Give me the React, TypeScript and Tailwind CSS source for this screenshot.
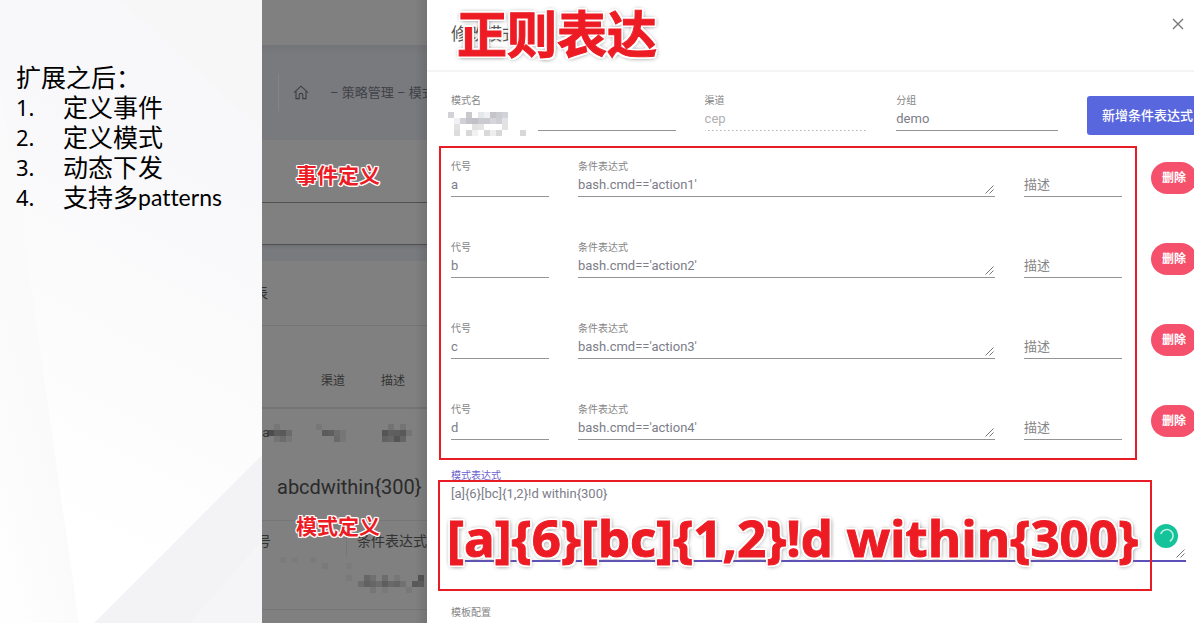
import { useId, useState } from "react";
import type { ReactNode } from "react";

const FONT = "font-['Roboto','Noto_Sans_CJK_SC',sans-serif]";

const OUTLINE =
  "text-[#ed1c24] whitespace-nowrap font-bold [text-shadow:2px_0_0_#fff,-2px_0_0_#fff,0_2px_0_#fff,0_-2px_0_#fff,2px_2px_0_#fff,-2px_-2px_0_#fff,2px_-2px_0_#fff,-2px_2px_0_#fff,0_0_5px_#777,1px_1px_5px_#888]";

const OUTLINE_SMALL =
  "text-[#ed1c24] whitespace-nowrap font-bold [text-shadow:1px_0_0_#fff,-1px_0_0_#fff,0_1px_0_#fff,0_-1px_0_#fff,1px_1px_0_#fff,-1px_-1px_0_#fff,1px_-1px_0_#fff,-1px_1px_0_#fff,0_0_2px_#fff]";

type Cell = [col: number, row: number, fill: string];

const NAME_CELLS: Cell[] = [
  [0, 0, "#d3d3d7"], [3, 0, "#cacace"], [5, 0, "#e6e7ea"], [6, 0, "#eff0f2"], [7, 0, "#c4c4ca"], [8, 0, "#cbccd2"], [9, 0, "#d2d3d8"],
  [1, 1, "#f0f1f3"], [2, 1, "#d0d1d5"], [3, 1, "#c3c3c9"], [4, 1, "#c0c0c8"], [5, 1, "#cacbd0"], [6, 1, "#cacad0"], [7, 1, "#d6d6da"], [8, 1, "#cecfd3"], [9, 1, "#e3e3e6"],
  [1, 2, "#e2e2e2"], [4, 2, "#e2e2e2"], [5, 2, "#e4e4e4"], [9, 2, "#e2e2e2"],
  [1, 3, "#dcdcdc"], [3, 3, "#d8d8d8"], [4, 3, "#f1f1f1"], [6, 3, "#d9d9d9"], [7, 3, "#eeeeee"], [8, 3, "#d8d8d8"], [12, 3, "#d8d8d8"],
];

const LIST_CELLS: Cell[] = [
  [2, 0, "#767676"], [9, 0, "#777"], [21, 0, "#727272"], [23, 0, "#747474"],
  [1, 1, "#4c4c4c"], [2, 1, "#5c5c5c"], [3, 1, "#595959"], [4, 1, "#6b6b6b"],
  [10, 1, "#5b5b5b"], [11, 1, "#5e5e5e"], [12, 1, "#6d6d6d"], [13, 1, "#767676"],
  [20, 1, "#555"], [21, 1, "#606060"], [22, 1, "#5e5e5e"], [23, 1, "#595959"], [24, 1, "#747474"],
  [2, 2, "#747474"], [3, 2, "#6c6c6c"], [4, 2, "#777"], [12, 2, "#6a6a6a"], [13, 2, "#777"],
  [20, 2, "#626262"], [21, 2, "#676767"], [22, 2, "#555"], [23, 2, "#656565"],
];

const DETAIL_CELLS: Cell[] = [
  [3, 0, "#7b7b7b"], [5, 0, "#7c7c7c"], [8, 0, "#7b7b7b"], [10, 1, "#7a7a7a"], [14, 1, "#7c7c7c"],
  [14, 3, "#7a7a7a"], [17, 3, "#666"], [18, 3, "#707070"], [20, 3, "#6c6c6c"], [22, 3, "#777"], [26, 3, "#555"],
  [16, 4, "#6e6e6e"], [17, 4, "#616161"], [18, 4, "#666"], [19, 4, "#6d6d6d"], [20, 4, "#5e5e5e"], [21, 4, "#696969"],
  [22, 4, "#656565"], [23, 4, "#717171"], [25, 4, "#595959"], [26, 4, "#5f5f5f"],
  [18, 5, "#767676"], [20, 5, "#7a7a7a"], [24, 5, "#787878"],
];

function Mosaic({ cells, cols, rows, className = "" }: { cells: Cell[]; cols: number; rows: number; className?: string }) {
  return (
    <svg aria-hidden="true" className={`block shrink-0 ${className}`} width={cols * 6} height={rows * 6} shapeRendering="crispEdges">
      {cells.map(([c, r, fill]) => (
        <rect key={`${c}-${r}`} x={c * 6} y={r * 6} width="6" height="6" fill={fill} />
      ))}
    </svg>
  );
}

function Slide() {
  const items = ["定义事件", "定义模式", "动态下发", "支持多"];
  return (
    <aside className="relative w-[262px] shrink-0 overflow-hidden bg-[#fafafa] px-4 pt-[62px] font-['Lato','Noto_Sans_CJK_SC',sans-serif] text-[25px] leading-[30px] text-black">
      <svg aria-hidden="true" className="absolute inset-0 h-full w-full" viewBox="0 0 262 623" preserveAspectRatio="none">
        <defs>
          <linearGradient id="facet-main" gradientUnits="userSpaceOnUse" x1="90" y1="540" x2="270" y2="200">
            <stop offset="0" stopColor="#ffffff" />
            <stop offset="1" stopColor="#f8f8fa" />
          </linearGradient>
          <linearGradient id="facet-left" gradientUnits="userSpaceOnUse" x1="0" y1="560" x2="70" y2="540">
            <stop offset="0" stopColor="#fefefe" />
            <stop offset="1" stopColor="#fafafb" />
          </linearGradient>
        </defs>
        <rect width="262" height="623" fill="url(#facet-main)" />
        <path d="M0 0 L120 0 L262 130 L262 0 Z" fill="#f7f7f7" />
        <path d="M0 90 L20 200 L36 322 L79 623 L0 623 Z" fill="url(#facet-left)" />
        <path d="M262 455 L94 623 L262 623 Z" fill="#f3f3f6" />
        <path d="M262 540 L190 623 L262 623 Z" fill="#f5f5f7" />
      </svg>
      <div className="relative">
        <p>扩展之后：</p>
        <ol>
          {items.map((item, i) => (
            <li key={item} className="flex whitespace-nowrap">
              <span className="w-[47px] font-['Noto_Sans',sans-serif] text-[22px]">{i + 1}.</span>
              <span>{item}</span>
              {i === 3 && <span className="text-[23px] [font-variant-ligatures:none]">patterns</span>}
            </li>
          ))}
        </ol>
      </div>
    </aside>
  );
}

function HomeIcon() {
  return (
    <svg aria-hidden="true" className="shrink-0" width="16" height="15" viewBox="0 0 16 15" fill="none" stroke="#3c3d42" strokeWidth="1.1">
      <path d="M1 7.6 L8 1.2 L15 7.6" />
      <path d="M3 6.2 V13.6 H6.2 V9.6 Q6.2 8.4 8 8.4 Q9.8 8.4 9.8 9.6 V13.6 H13 V6.2" />
    </svg>
  );
}

function DimmedPage() {
  return (
    <section className="relative w-[165px] shrink-0 overflow-hidden bg-[#808080] text-[12px] leading-4 whitespace-nowrap text-[#333]">
      <div className="h-[45px]" />
      <nav className="flex h-[95px] items-center bg-linear-to-b from-[#747578] to-[#797a7d] to-10% pl-4 text-[13px] text-[#414248]">
        <span className="mr-[14px] h-[37px] border-l border-[#838487]" />
        <HomeIcon />
        <span className="ml-[21px]">– 策略管理 – 模式管理</span>
      </nav>
      <div className="flex h-[63px] items-center border-b border-[#505050] pt-[9px] pl-[34px]">
        <span className={`text-[21px] leading-6 ${OUTLINE_SMALL}`}>事件定义</span>
      </div>
      <div className="h-[42px] border-b border-[#505050]" />
      <div className="h-4 bg-linear-to-b from-[#707174] to-[#797a7d] to-30%" />
      <div className="flex h-[65px] items-center border-b border-[#757575]">
        <span className="-ml-2 text-[14px]">表</span>
      </div>
      <div className="flex h-[83px] items-end border-b-2 border-[#747474] pb-[18px] pl-[59px]">
        <span className="w-[60px]">渠道</span>
        <span>描述</span>
      </div>
      <div className="relative flex h-[41px] items-center pt-[7px]">
        <span className="absolute top-4 -left-[7px] text-[13px]">pa</span>
        <Mosaic cells={LIST_CELLS} cols={27} rows={3} />
      </div>
      <div className="flex h-[71px] items-center border-b border-[#767676] pt-1">
        <span className="-ml-1 w-[19px]">：</span>
        <span className="text-[20px] leading-6 text-[#2a2a2a]">abcdwithin{"{300}"}</span>
      </div>
      <div className="relative flex h-9 items-center text-[14px]">
        <span className="-ml-[5px] w-[91px] pt-1">号</span>
        <span className="border-l border-[#777] pt-3 pb-2 pl-[10px]">条件表达式</span>
        <span className={`absolute -top-[6px] left-[34px] text-[21px] leading-6 ${OUTLINE_SMALL}`}>模式定义</span>
      </div>
      <div className="flex h-[53px] border-b border-[#767676]">
        <Mosaic cells={DETAIL_CELLS} cols={28} rows={6} />
      </div>
      <div className="pointer-events-none absolute inset-y-0 right-0 w-3 bg-linear-to-r from-transparent to-black/10" />
    </section>
  );
}

const LABEL = "block h-[14px] text-[10px] leading-[18px] whitespace-nowrap";
const CONTROL = "block h-[25px] w-full border-b bg-transparent text-[13px] leading-[24px] text-[#7c7d89] outline-none";

function ResizeGrip({ className }: { className: string }) {
  return (
    <svg aria-hidden="true" className={`pointer-events-none absolute ${className}`} width="9" height="9" viewBox="0 0 9 9" stroke="#777" strokeWidth="1">
      <path d="M0.5 8.5 L8.5 0.5 M4.5 8.5 L8.5 4.5" />
    </svg>
  );
}

function Field({ label, children }: { label: string; children: (id: string) => ReactNode }) {
  const id = useId();
  return (
    <div className="relative min-w-0">
      <label htmlFor={id} className={`${LABEL} text-[#858585]`}>{label}</label>
      {children(id)}
    </div>
  );
}

function ConditionRow({ code, expression }: { code: string; expression: string }) {
  const [remark, setRemark] = useState("");
  return (
    <div className="grid grid-cols-[98fr_417fr_98fr_43px] items-center gap-[29px]">
      <Field label="代号">
        {(id) => <input id={id} defaultValue={code} className={`${CONTROL} border-[#949494]`} />}
      </Field>
      <Field label="条件表达式">
        {(id) => (
          <>
            <textarea id={id} rows={1} defaultValue={expression} className={`${CONTROL} resize-none overflow-hidden border-[#949494] pt-px`} />
            <ResizeGrip className="right-px bottom-[3px]" />
          </>
        )}
      </Field>
      <input
        aria-label="描述"
        placeholder="描述"
        value={remark}
        onChange={(e) => setRemark(e.target.value)}
        className={`${CONTROL} self-end border-[#949494] placeholder:text-[#858585]`}
      />
      <button type="button" className="h-8 w-[46px] rounded-full bg-[#f5516c] text-[12px] font-bold text-white">
        删除
      </button>
    </div>
  );
}

const CONDITIONS = [
  { code: "a", expression: "bash.cmd=='action1'" },
  { code: "b", expression: "bash.cmd=='action2'" },
  { code: "c", expression: "bash.cmd=='action3'" },
  { code: "d", expression: "bash.cmd=='action4'" },
];

function Dialog() {
  return (
    <main role="dialog" aria-labelledby="dialog-title" className="relative min-w-0 flex-1 overflow-hidden bg-white">
      <header className="relative flex h-[72px] items-center justify-between border-b-2 border-[#f4f4f4] pr-[10px] pl-6">
        <h1 id="dialog-title" className="text-[17px] text-[#555]">修改模式</h1>
        <span className={`absolute top-[6px] left-[30px] text-[50px] leading-[60px] [-webkit-text-stroke:1px_#ed1c24] ${OUTLINE}`}>正则表达</span>
        <button type="button" aria-label="关闭" className="mb-[22px]">
          <svg width="12" height="12" viewBox="0 0 12 12" stroke="#777" strokeWidth="1.4">
            <path d="M1 1 L11 11 M11 1 L1 11" />
          </svg>
        </button>
      </header>

      <form className="pt-5 pl-6" onSubmit={(e) => e.preventDefault()}>
        <div className="grid grid-cols-[225fr_163fr_162fr_107px] gap-[29px]">
          <Field label="模式名">
            {(id) => (
              <>
                <input id={id} className={`${CONTROL} border-[#949494]`} />
                <Mosaic cells={NAME_CELLS} cols={15} rows={4} className="absolute top-5 -left-[3px] bg-white" />
              </>
            )}
          </Field>
          <Field label="渠道">
            {(id) => (
              <input
                id={id}
                disabled
                defaultValue="cep"
                className="block h-[25px] w-full bg-[linear-gradient(90deg,#8a8a8a_1px,transparent_1px)] bg-[length:4px_1px] bg-bottom bg-repeat-x text-[13px] leading-6 text-[#b0b0b0]"
              />
            )}
          </Field>
          <Field label="分组">
            {(id) => <input id={id} defaultValue="demo" className={`${CONTROL} border-[#949494]`} />}
          </Field>
          <button type="button" className="mt-1 h-[39px] rounded-l-[3px] bg-[#5867dd] pl-[15px] text-left text-[13px] font-medium whitespace-nowrap text-white">
            新增条件表达式
          </button>
        </div>

        <div className="relative mt-[23px] flex flex-col gap-[42px]">
          {CONDITIONS.map((c) => (
            <ConditionRow key={c.code} {...c} />
          ))}
          <div className="pointer-events-none absolute -top-3 right-[57px] -bottom-5 -left-3 border-2 border-[#e81c24]" />
        </div>

        <div className="relative mt-[27px] pr-2">
          <label htmlFor="pattern" className={`${LABEL} text-[#6a5fd0]`}>模式表达式</label>
          <textarea
            id="pattern"
            defaultValue="[a]{6}[bc]{1,2}!d within{300}"
            className="block h-[81px] w-full resize-none border-b-2 border-[#5d50b8] bg-transparent pt-px text-[13px] leading-6 text-[#7c7d89] outline-none"
          />
          <ResizeGrip className="right-[9px] bottom-1" />
          <div className="pointer-events-none absolute top-[13px] right-[42px] -bottom-[29px] -left-[13px] border-2 border-[#e81c24]" />
          <span className={`pointer-events-none absolute top-[38px] -left-1 font-['Open_Sans',sans-serif] text-[51px] leading-[64px] [-webkit-text-stroke:1px_#ed1c24] ${OUTLINE}`}>
            [a]{"{6}"}[bc]{"{1,2}"}!d within{"{300}"}
          </span>
          <svg aria-hidden="true" className="absolute top-[57px] right-4" width="24" height="24" viewBox="0 0 24 24" fill="none">
            <circle cx="12" cy="12" r="12" fill="#15c39a" />
            <path d="M7 9.4 A6.3 6.3 0 1 1 16.4 17" stroke="#b9f0e0" strokeWidth="1.6" strokeLinecap="round" />
          </svg>
        </div>

        <p className={`${LABEL} mt-[42px] text-[#858585]`}>模板配置</p>
      </form>
    </main>
  );
}

export default function App() {
  return (
    <div className={`flex min-h-screen overflow-hidden ${FONT}`}>
      <Slide />
      <DimmedPage />
      <Dialog />
    </div>
  );
}
